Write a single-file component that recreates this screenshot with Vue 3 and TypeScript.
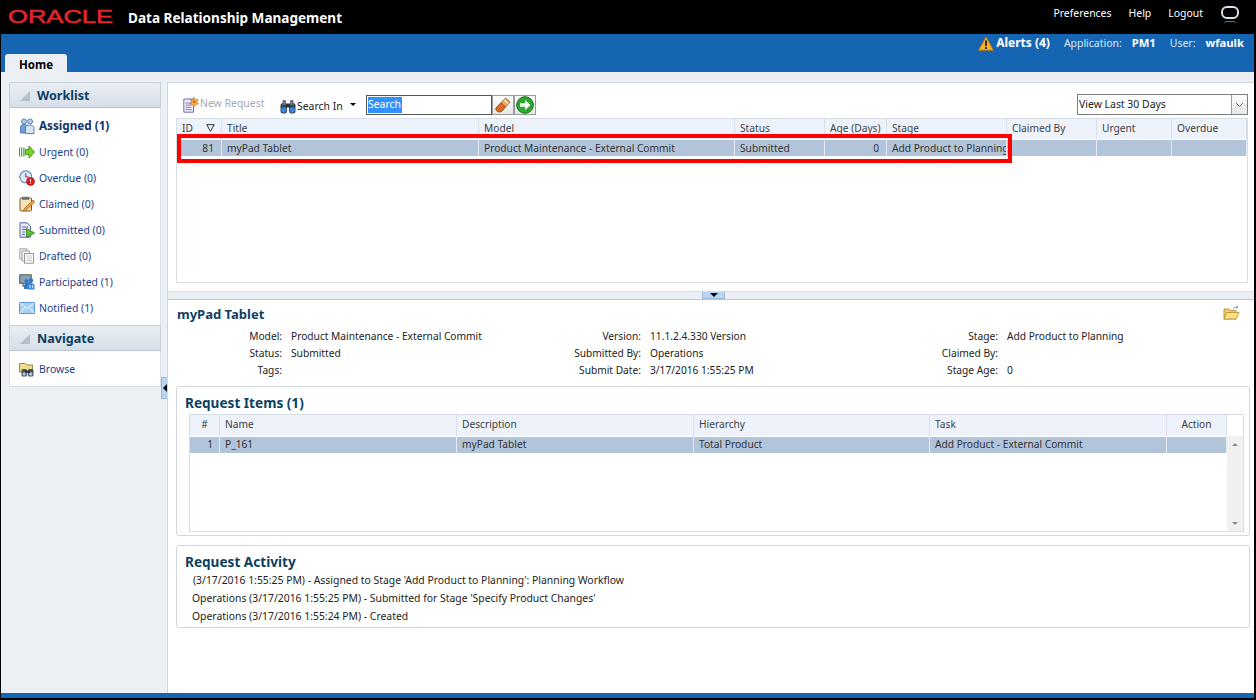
<script setup lang="ts">
interface NavItem { icon: string; label: string; active?: boolean }
const worklist: NavItem[] = [
  { icon: 'assigned', label: 'Assigned (1)', active: true },
  { icon: 'urgent', label: 'Urgent (0)' },
  { icon: 'overdue', label: 'Overdue (0)' },
  { icon: 'claimed', label: 'Claimed (0)' },
  { icon: 'submitted', label: 'Submitted (0)' },
  { icon: 'drafted', label: 'Drafted (0)' },
  { icon: 'participated', label: 'Participated (1)' },
  { icon: 'notified', label: 'Notified (1)' },
]
const details: [string, string][] = [
  ['Model:', 'Product Maintenance - External Commit'], ['Version:', '11.1.2.4.330 Version'], ['Stage:', 'Add Product to Planning'],
  ['Status:', 'Submitted'], ['Submitted By:', 'Operations'], ['Claimed By:', ''],
  ['Tags:', ''], ['Submit Date:', '3/17/2016 1:55:25 PM'], ['Stage Age:', '0'],
]
const activity = [
  "(3/17/2016 1:55:25 PM) - Assigned to Stage 'Add Product to Planning': Planning Workflow",
  "Operations (3/17/2016 1:55:25 PM) - Submitted for Stage 'Specify Product Changes'",
  'Operations (3/17/2016 1:55:24 PM) - Created',
]
</script>

<template>
  <div class="app">
    <svg class="defs" width="0" height="0" aria-hidden="true">
      <symbol id="assigned" viewBox="0 0 16 16">
        <circle cx="5" cy="3.5" r="2.6" fill="#a9c8ea" stroke="#4a76ad" stroke-width=".8"/>
        <circle cx="11" cy="3.5" r="2.6" fill="#a9c8ea" stroke="#4a76ad" stroke-width=".8"/>
        <path d="M1.5 15V8.5Q2 6.5 5 6.5T8 8.5V15Z" fill="#6f9fd6" stroke="#3f6ca5" stroke-width=".8"/>
        <path d="M6.5 15.5V9Q7 7 10.5 7T15 9V15.5Z" fill="#d4e4f5" stroke="#3f6ca5" stroke-width=".8"/>
      </symbol>
      <symbol id="urgent" viewBox="0 0 16 16">
        <path d="M.5 3.5V12.5M2.7 3.5V12.5M4.9 3.5V12.5" stroke="#4aa02c" stroke-width="1.2"/>
        <path d="M6.5 5.5H10V2L15.5 8L10 14V10.5H6.5Z" fill="#7ed321" stroke="#3d8a1e" stroke-width=".9"/>
      </symbol>
      <symbol id="overdue" viewBox="0 0 16 16">
        <circle cx="6.8" cy="6.8" r="6" fill="#dbe9f8" stroke="#4f80bd" stroke-width="1.1"/>
        <path d="M6.8 3V7H10" fill="none" stroke="#b03030" stroke-width="1"/>
        <circle cx="11.5" cy="11.5" r="4" fill="#d81e1e" stroke="#8f1010" stroke-width=".6"/>
        <path d="M11.5 9V12M11.5 13V14" stroke="#fff" stroke-width="1.1"/>
      </symbol>
      <symbol id="claimed" viewBox="0 0 16 16">
        <rect x="1" y="2" width="11.5" height="13" rx="1" fill="#f2e3b8" stroke="#7a5a1e"/>
        <rect x="3" y=".8" width="7" height="3" fill="#6f6f6f"/>
        <path d="M5 13L14 4L15.8 5.8L7 14.5L4.5 15Z" fill="#f0a030" stroke="#a4601a" stroke-width=".7"/>
      </symbol>
      <symbol id="submitted" viewBox="0 0 16 16">
        <path d="M1 .8H8L11.5 4V15.2H1Z" fill="#e7e9f8" stroke="#5a5f9c"/>
        <path d="M3 5H9M3 7.5H7M3 10H6M3 12.5H6" stroke="#5a5f9c" stroke-width=".9"/>
        <path d="M7.5 6.5L15.5 11L7.5 15.5Z" fill="#5fc02c" stroke="#2d7f18" stroke-width=".8"/>
      </symbol>
      <symbol id="drafted" viewBox="0 0 16 16">
        <path d="M.8.8H8V11H.8Z" fill="#f2f2f2" stroke="#8a8a8a" stroke-width=".8"/>
        <path d="M3 3H10.5V13H3Z" fill="#f6f6f6" stroke="#8a8a8a" stroke-width=".8"/>
        <path d="M5.5 5.5H14.5V15.2H5.5Z" fill="#fff" stroke="#7a7a7a" stroke-width=".8"/>
        <path d="M7.5 8H13M7.5 10.2H13M7.5 12.5H13" stroke="#a0a0a0" stroke-width=".9" stroke-dasharray="1.3 .7"/>
      </symbol>
      <symbol id="participated" viewBox="0 0 16 16">
        <rect x=".7" y=".8" width="11.5" height="8.5" fill="#8a9fc0" stroke="#4a5f3a"/>
        <path d="M4 9.5V12H8" stroke="#8a7a3a" stroke-width="1.5" fill="none"/>
        <circle cx="7.5" cy="7" r="2" fill="#2f78d0"/>
        <circle cx="12" cy="6.5" r="2.2" fill="#2f78d0"/>
        <path d="M5 15V11.5Q5.5 9.2 8 9.2T10 11V15Z" fill="#2f78d0"/>
        <path d="M9 15.5V11Q9.5 9 12 9T15.5 11V15.5Z" fill="#3f8be0"/>
        <path d="M11 11V14M13.5 11V14" stroke="#fff" stroke-width=".7"/>
      </symbol>
      <symbol id="notified" viewBox="0 0 16 12">
        <rect x=".5" y=".5" width="15" height="11" fill="#a8d0f5" stroke="#5b9be0"/>
        <path d="M.8.8L8 6.5L15.2.8M.8 11.2L6 5M15.2 11.2L10 5" fill="none" stroke="#eef7ff" stroke-width="1"/>
      </symbol>
      <symbol id="browse" viewBox="0 0 16 16">
        <path d="M.5 2.5H6L7.5 4H13.5V11H.5Z" fill="#eedf8a" stroke="#8f7f2f" stroke-width=".9"/>
        <rect x="2.5" y="8" width="5.5" height="7.5" rx="1.5" fill="#47525e"/>
        <rect x="9" y="8" width="5.5" height="7.5" rx="1.5" fill="#47525e"/>
        <rect x="6" y="9.5" width="5" height="2.5" fill="#2f3740"/>
        <circle cx="5.2" cy="13" r="1.7" fill="#b6c8d8"/>
        <circle cx="11.8" cy="13" r="1.7" fill="#b6c8d8"/>
      </symbol>
      <symbol id="binoculars" viewBox="0 0 16 15">
        <rect x=".5" y="4" width="6.5" height="10.5" rx="2.5" fill="#3a4652"/>
        <rect x="9" y="4" width="6.5" height="10.5" rx="2.5" fill="#3a4652"/>
        <rect x="2.5" y="1" width="3.5" height="5" rx="1" fill="#6a747e"/>
        <rect x="10" y="1" width="3.5" height="5" rx="1" fill="#6a747e"/>
        <rect x="6" y="4.5" width="4" height="4" fill="#2a323a"/>
        <ellipse cx="3.7" cy="11" rx="2.5" ry="2.8" fill="#2e8ae6"/>
        <ellipse cx="12.3" cy="11" rx="2.5" ry="2.8" fill="#2e8ae6"/>
      </symbol>
      <symbol id="newreq" viewBox="0 0 16 16">
        <path d="M.8 2H10.5V15.2H.8Z" fill="#eceaf8" stroke="#6f6fae"/>
        <path d="M2.7 6H8.5M2.7 8.2H8.5M2.7 10.4H8.5M2.7 12.6H8.5" stroke="#7b7bb2" stroke-width=".9"/>
        <path d="M11 .5L12.2 3L15 2.5L13.6 5L15.5 7L12.8 7.2L11 9.5L9.6 7.2L7 7L8.8 5L7.5 2.5L10 3Z" fill="#f6c73a" stroke="#d8502a" stroke-width=".7"/>
        <circle cx="11.2" cy="5" r="1.2" fill="#e03a20"/>
      </symbol>
      <symbol id="eraser" viewBox="0 0 16 16">
        <path d="M10.5 1L15 5L6.5 14.5Q4 15.5 2 14T1.5 10.5Z" fill="#f0a060" stroke="#8a5a20" stroke-width=".8"/>
        <path d="M6 5.8L10.3 9.8L6.5 14.5Q4 15.5 2 14T1.5 10.5Z" fill="#df6a22" stroke="#8a4a18" stroke-width=".7"/>
        <path d="M9.5 3L13 6.5" stroke="#fff3c0" stroke-width="1.4"/>
      </symbol>
      <symbol id="go" viewBox="0 0 18 18">
        <circle cx="9" cy="9" r="8.3" fill="#2fa82f" stroke="#136a13" stroke-width="1"/>
        <path d="M4 7.3H9V4L14.5 9L9 14V10.7H4Z" fill="#fff"/>
      </symbol>
      <symbol id="alert" viewBox="0 0 16 15">
        <path d="M8 .8L15.4 14.2H.6Z" fill="#f7b52c" stroke="#b8730c" stroke-width=".9" stroke-linejoin="round"/>
        <path d="M8 4.5V10M8 11V13" stroke="#2a2a2a" stroke-width="2"/>
      </symbol>
      <symbol id="folder" viewBox="0 0 17 14">
        <path d="M1 3H6L7 4.5H13V13H1Z" fill="#f5cf6a" stroke="#a8812a" stroke-width=".8"/>
        <path d="M1 13L3.5 6.5H16L13 13Z" fill="#fbe08c" stroke="#b48a24" stroke-width=".8"/>
        <path d="M10 3.2Q11.5.8 14.5 1M13 .2L15 1L13.4 2.6" fill="none" stroke="#7d8f9f" stroke-width=".9"/>
      </symbol>
    </svg>

    <header class="masthead">
      <span class="oracle">ORACLE</span>
      <span class="product">Data Relationship Management</span>
      <nav class="global">
        <span>Preferences</span><span>Help</span><span>Logout</span>
        <span class="ring"><i class="ring-main"></i><i class="ring-shadow"></i></span>
      </nav>
    </header>

    <div class="band">
      <div class="band-info">
        <svg class="alert" width="16" height="15"><use href="#alert"/></svg>
        <b class="alerts">Alerts (4)</b>
        <span class="lab">Application:</span><b class="val">PM1</b>
        <span class="lab">User:</span><b class="val last">wfaulk</b>
      </div>
      <div class="tab">Home</div>
    </div>

    <div class="body">
      <aside class="side">
        <div class="panel">
          <h3 class="accordion first"><i class="tri"></i>Worklist</h3>
          <ul class="nav">
            <li v-for="n in worklist" :key="n.label" :class="{ active: n.active }">
              <svg class="nav-ico" width="16" height="16"><use :href="'#' + n.icon"/></svg>{{ n.label }}
            </li>
          </ul>
          <h3 class="accordion"><i class="tri"></i>Navigate</h3>
          <ul class="nav">
            <li><svg class="nav-ico" width="16" height="16"><use href="#browse"/></svg>Browse</li>
          </ul>
        </div>
        <div class="collapse"><i></i></div>
      </aside>

      <main class="main">
        <section class="top">
          <div class="toolbar">
            <span class="tool-new"><svg width="16" height="16"><use href="#newreq"/></svg><span class="lift">New Request</span></span>
            <span class="tool-search"><svg width="16" height="15"><use href="#binoculars"/></svg>Search In<i class="caret"></i></span>
            <span class="search"><span class="sel">Search</span></span>
            <span class="sq"><svg width="16" height="16"><use href="#eraser"/></svg></span>
            <span class="sq"><svg width="18" height="18"><use href="#go"/></svg></span>
            <span class="select"><span class="grow">View Last 30 Days</span><span class="sel-btn"><svg width="9" height="6" viewBox="0 0 9 6"><path d="M1 1L4.5 4.5L8 1" fill="none" stroke="#666"/></svg></span></span>
          </div>
          <div class="grid-pane">
            <table class="grid req">
              <colgroup><col style="width:45px"><col style="width:257px"><col style="width:256px"><col style="width:90px"><col style="width:62px"><col style="width:120px"><col style="width:90px"><col style="width:75px"><col style="width:75px"></colgroup>
              <thead><tr>
                <th class="id-h">ID<svg width="9" height="8" viewBox="0 0 9 8"><path d="M.7.7H8.3L4.5 7.3Z" fill="none" stroke="#333"/></svg></th>
                <th>Title</th><th>Model</th><th>Status</th><th>Age (Days)</th><th>Stage</th><th>Claimed By</th><th>Urgent</th><th>Overdue</th>
              </tr></thead>
              <tbody><tr>
                <td class="num id">81</td><td>myPad Tablet</td><td>Product Maintenance - External Commit</td><td>Submitted</td><td class="num">0</td><td>Add Product to Planning</td><td></td><td></td><td></td>
              </tr></tbody>
            </table>
            <div class="redbox"></div>
          </div>
        </section>

        <div class="splitter"><span class="split-btn"><i></i></span></div>

        <section class="bottom">
          <div class="title-row">
            <h2>myPad Tablet</h2>
            <svg width="17" height="14"><use href="#folder"/></svg>
          </div>
          <dl class="details">
            <div v-for="d in details" :key="d[0]" class="pair"><dt>{{ d[0] }}</dt><dd>{{ d[1] }}</dd></div>
          </dl>

          <div class="box items">
            <h2>Request Items (1)</h2>
            <div class="items-wrap">
              <table class="grid its">
                <colgroup><col style="width:30px"><col style="width:237px"><col style="width:237px"><col style="width:236px"><col style="width:237px"><col style="width:60px"></colgroup>
                <thead><tr><th class="ctr">#</th><th>Name</th><th>Description</th><th>Hierarchy</th><th>Task</th><th class="ctr">Action</th></tr></thead>
                <tbody><tr><td class="num one">1</td><td>P_161</td><td>myPad Tablet</td><td>Total Product</td><td>Add Product - External Commit</td><td></td></tr></tbody>
              </table>
              <div class="scroll"><i class="up"></i><i class="down"></i></div>
            </div>
          </div>

          <div class="box activity">
            <h2>Request Activity</h2>
            <p v-for="(a, i) in activity" :key="i" :class="{ nudge: i === 0 }">{{ a }}</p>
          </div>
        </section>
      </main>
    </div>
    <div class="foot"></div>
  </div>
</template>

<style>
html, body { margin: 0; background: #000; }
</style>

<style scoped>
* { box-sizing: border-box; }
.app {
  width: 1256px; height: 700px; display: flex; flex-direction: column; overflow: hidden;
  border-left: 1px solid #000; border-right: 2px solid #000; border-bottom: 2px solid #000;
  font: 10.2px/1 "Noto Sans", "Liberation Sans", sans-serif; color: #333; background: #ecf0f5;
}
.defs { position: absolute; }
.masthead { height: 34px; background: #000; color: #fff; display: flex; align-items: center; flex: none; }
.oracle {
  margin-left: 7px; width: 104px; color: #e2252b; font: 400 18px/1 "Liberation Sans", sans-serif;
  -webkit-text-stroke: .5px #e2252b; transform: scaleX(1.42); transform-origin: 0 50%;
}
.product { margin-left: 16px; font-weight: 700; font-size: 13.55px; margin-top: 4px; }
.global { margin-left: auto; display: flex; align-items: center; gap: 17px; padding-right: 15px; margin-top: -7px; font-size: 10.45px; }
.ring { position: relative; width: 18px; height: 18px; margin: 2px 0 0 1px; }
.ring-main { position: absolute; left: 0; top: 0; width: 18px; height: 13px; border: 2.2px solid #d6e4f0; border-radius: 6px / 6px; }
.ring-shadow { position: absolute; left: 3px; top: 15px; width: 12px; height: 3px; border-top: 1px solid #6b7278; border-radius: 6px 6px 0 0; }
.band { height: 38px; background: #1565b2; flex: none; display: flex; flex-direction: column; justify-content: space-between; }
.band-info { display: flex; align-items: center; justify-content: flex-end; color: #dce8f5; padding: 1px 10px 0 0; height: 17px; font-size: 10.45px; }
.alert { margin-right: 2px; }
.alerts { color: #fff; font-size: 12px; margin-right: 14px; }
.lab { margin-right: 10px; }
.val { color: #fff; font-size: 11.3px; margin-right: 14px; }
.val.last { margin-right: 0; }
.tab {
  width: 62px; height: 18px; margin-left: 4px; background: #ecf0f5; border-radius: 3px 3px 0 0; color: #000;
  font-weight: 700; font-size: 11.5px; text-align: center; padding-top: 5px;
}
.body { flex: 1; display: flex; min-height: 0; }
.side { width: 166px; flex: none; padding: 10px 6px 0 8px; position: relative; }
.panel { width: 152px; background: #fff; border: 1px solid #d9dfe6; border-top: 0; height: 305px; }
.accordion {
  margin: 0 -1px; height: 26px; display: flex; align-items: center; padding: 2px 0 0 10px; gap: 7px;
  background: linear-gradient(#e9eef4, #d6dee8); border: 1px solid #c8d0da; border-bottom-color: #bcc6d2;
  color: #0b3f63; font-size: 12.6px; font-weight: 700;
}
.accordion.first { border-radius: 2px 2px 0 0; }
.tri { width: 0; height: 0; border-left: 10px solid transparent; border-bottom: 10px solid #b4c0ce; }
.nav { list-style: none; margin: 0; padding: 5px 0 4px 9px; font-size: 10.45px; }
.nav li { height: 26px; display: flex; align-items: center; color: #1b3f8c; white-space: nowrap; }
.nav li.active { color: #12336e; font-weight: 700; font-size: 11.7px; }
.nav-ico { margin-right: 4px; flex: none; }
.collapse {
  position: absolute; left: 160px; top: 305px; width: 6px; height: 22px; background: #b9d4f0; border: 1px solid #9db9d8; border-right: 0;
  display: flex; align-items: center; justify-content: center;
}
.collapse i { border-top: 4px solid transparent; border-bottom: 4px solid transparent; border-right: 4px solid #000; }
.main { flex: none; width: 1087px; margin-top: 10px; background: #fff; border-left: 1px solid #cfd6de; border-top: 1px solid #cfd6de; display: flex; flex-direction: column; }
.top { height: 208px; flex: none; padding: 11px 6px 0 8px; }
.toolbar { height: 21px; display: flex; align-items: center; margin-bottom: 3px; padding-left: 7px; font-size: 10.45px; }
.tool-new { display: flex; align-items: center; color: #a4aab2; width: 97px; gap: 1px; }
.lift { padding-bottom: 2px; }
.grow { flex: 1; }
.tool-search { display: flex; align-items: center; color: #222; width: 86px; gap: 1px; padding-top: 3px; }
.caret { margin-left: 6px; margin-top: -4px; border-left: 3px solid transparent; border-right: 3px solid transparent; border-top: 3px solid #000; }
.search { width: 126px; height: 20px; border: 1px solid #555; background: #fff; padding: 1px; display: flex; }
.sel { background: #3390ff; color: #fff; width: 34px; height: 16px; display: block; line-height: 15px; }
.sq { width: 22px; height: 20px; border: 1px solid #9a9a9a; background: linear-gradient(#fff, #e6e6e6); display: flex; align-items: center; justify-content: center; }
.select { margin-left: auto; width: 171px; height: 21px; border: 1px solid #7f7f7f; display: flex; align-items: center; padding-left: 1px; color: #222; }
.sel-btn { width: 16px; height: 19px; background: linear-gradient(#fdfdfd, #e6e8ea); border-left: 1px solid #9a9a9a; display: flex; align-items: center; justify-content: center; }
.grid-pane { position: relative; height: 165px; border: 1px solid #d6dde5; }
.redbox { position: absolute; left: 0; top: 15px; width: 835px; height: 29px; border: 4px solid #f00; pointer-events: none; }
.grid { border-collapse: separate; border-spacing: 0; table-layout: fixed; }
.req { width: 1070px; }
.its { width: 1037px; flex: none; align-self: flex-start; }
.grid th { height: 21px; background: #eef2fa; font-weight: 400; text-align: left; padding: 0 5px 2px; border-right: 1px solid #d8dfe8; border-bottom: 1px solid #fff; color: #3a3f45; white-space: nowrap; overflow: hidden; }
.its th { height: 22px; padding-bottom: 1px; }
.grid td { height: 17px; background: #b2c4da; padding: 0 5px; border-right: 1px solid #e6ebf1; white-space: nowrap; overflow: hidden; color: #333; border-bottom: 1px solid #fff; }
.grid td.num { text-align: right; padding-right: 7px; }
.grid th.ctr { text-align: center; }
.id-h svg { margin-left: 13px; }
.splitter { height: 9px; flex: none; background: #ecf0f5; border-top: 1px solid #d6dde5; border-bottom: 1px solid #bcc6d2; position: relative; }
.split-btn { width: 23px; height: 7px; background: #b9d4f0; border: 1px solid #9db9d8; border-width: 0 1px 1px; display: flex; justify-content: center; align-items: center; position: absolute; left: 534px; top: 0; }
.split-btn i { border-left: 4px solid transparent; border-right: 4px solid transparent; border-top: 4px solid #000; }
.bottom { flex: 1; padding: 0 3px 0 8px; }
.title-row { height: 28px; display: flex; align-items: center; justify-content: space-between; padding: 1px 11px 0 1px; }
h2 { margin: 0; color: #0b3f63; font-size: 13.6px; font-weight: 700; }
.title-row h2 { font-size: 13px; }
.title-row svg { margin-top: -4px; }
.details { margin: 0; display: grid; grid-template-columns: 359px 357px 1fr; grid-auto-rows: 17px; height: 58px; }
.pair { display: grid; grid-template-columns: 106px 1fr; column-gap: 9px; align-items: center; }
dt { text-align: right; color: #222; }
dd { margin: 0; color: #222; white-space: nowrap; }
.box { width: 1074px; border: 1px solid #d0d7df; border-radius: 3px; padding: 9px 8px 0; }
.items { height: 150px; }
.items-wrap { display: flex; margin: 4px 0 0 4px; height: 118px; width: 1055px; border: 1px solid #d6dde5; }
.scroll { width: 16px; margin-left: auto; margin-top: 21px; background: #f0f0f0; position: relative; }
.scroll i { position: absolute; left: 5px; border-left: 3px solid transparent; border-right: 3px solid transparent; }
.up { top: 7px; border-bottom: 3px solid #8f8f8f; }
.down { bottom: 6px; border-top: 3px solid #8f8f8f; }
.its td.num { padding-right: 6px; }
.activity { height: 83px; margin-top: 9px; }
.activity p { margin: 0; height: 18px; line-height: 18px; padding-left: 7px; color: #222; white-space: nowrap; font-size: 10.4px; }
.activity h2 { margin-bottom: 2px; }
.activity p.nudge { padding-left: 8px; }
.foot { height: 5px; background: #1565b2; flex: none; }
</style>
